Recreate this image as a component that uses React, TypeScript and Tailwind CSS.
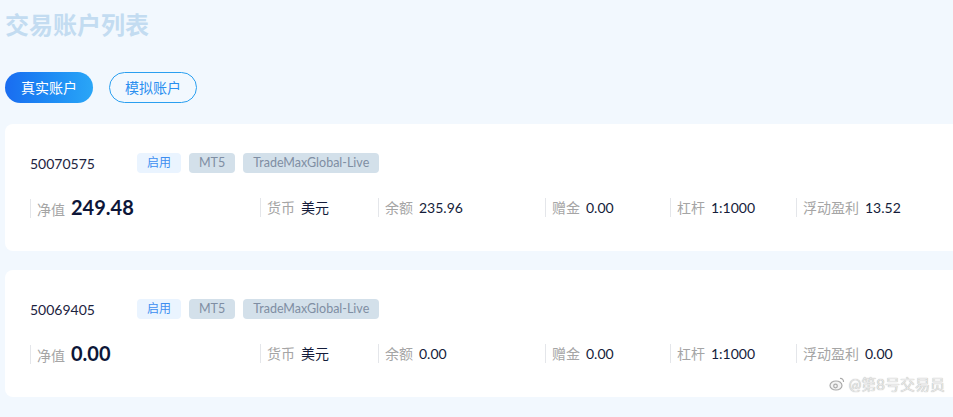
import React from 'react';

type Account = {
    id: string;
    equity: string;
    balance: string;
    bonus: string;
    leverage: string;
    floating: string;
};

const accounts: Account[] = [
    { id: '50070575', equity: '249.48', balance: '235.96', bonus: '0.00', leverage: '1:1000', floating: '13.52' },
    { id: '50069405', equity: '0.00', balance: '0.00', bonus: '0.00', leverage: '1:1000', floating: '0.00' },
];

const font = { fontFamily: 'Lato, "Noto Sans CJK SC", sans-serif' };

function Field({ label, value, width }: { label: string; value: string; width: string }) {
    return (
        <div className={`flex items-center ${width}`}>
            <div className="h-[19px] w-px bg-[#e4e6ea]" />
            <span className="ml-[6px] text-[14px] text-[#a5a5a5]">{label}</span>
            <span className="ml-[6px] text-[14px] text-[#141c3a]">{value}</span>
        </div>
    );
}

function AccountCard({ a }: { a: Account }) {
    return (
        <div className="ml-[5px] w-[960px] h-[127px] rounded-[8px] bg-white pl-[25px] pt-[29px]">
            <div className="flex items-center h-[20px]">
                <span className="w-[107px] text-[14px] text-[#1c2340]">{a.id}</span>
                <span className="h-[20px] px-[10px] rounded-[4px] bg-[#eaf4ff] text-[12px] leading-[20px] text-[#3d8ef0]">启用</span>
                <span className="ml-[8px] h-[20px] px-[10px] rounded-[4px] bg-[#d3e0ea] text-[12.5px] leading-[20px] text-[#7f8ea3]">MT5</span>
                <span className="ml-[8px] h-[20px] px-[10px] rounded-[4px] bg-[#d3e0ea] text-[12.5px] leading-[20px] text-[#7f8ea3]">TradeMaxGlobal-Live</span>
            </div>
            <div className="mt-[19px] flex items-center">
                <div className="flex items-center w-[230px]">
                    <div className="h-[19px] w-px bg-[#e4e6ea] mt-[3px]" />
                    <span className="ml-[6px] mt-[4px] text-[14px] text-[#a5a5a5]">净值</span>
                    <span className="ml-[6px] text-[20px] font-bold text-[#0d1638]">{a.equity}</span>
                </div>
                <Field label="货币" value="美元" width="w-[118px]" />
                <Field label="余额" value={a.balance} width="w-[167px]" />
                <Field label="赠金" value={a.bonus} width="w-[125px]" />
                <Field label="杠杆" value={a.leverage} width="w-[126px]" />
                <Field label="浮动盈利" value={a.floating} width="w-[140px]" />
            </div>
        </div>
    );
}

export default function App() {
    return (
        <div className="relative w-[953px] h-[417px] overflow-hidden bg-[#f2f8fe]" style={font}>
            <h1 className="pl-[5px] pt-[9px] text-[24px] leading-[32px] font-bold text-[#c3dcf1]">交易账户列表</h1>
            <div className="mt-[31px] ml-[5px] flex gap-[16px]">
                <button className="w-[88px] h-[31px] rounded-full bg-gradient-to-r from-[#1a6cf0] to-[#2aa6f7] text-[14px] text-white">
                    真实账户
                </button>
                <button className="w-[88px] h-[31px] rounded-full border border-[#2a9ff0] text-[14px] text-[#2a8ff0]">
                    模拟账户
                </button>
            </div>
            <div className="mt-[21px] flex flex-col gap-[19px]">
                {accounts.map((a) => (
                    <AccountCard key={a.id} a={a} />
                ))}
            </div>
            <div className="absolute right-[8px] bottom-[22px] flex items-center gap-[4px] text-[15px] text-[#e8e8e8] [text-shadow:0_0_1px_#999]">
                <svg width="16" height="14" viewBox="0 0 16 14" fill="none" stroke="#aaa" strokeWidth="1.2">
                    <ellipse cx="7" cy="8.5" rx="6" ry="4.5" fill="#f4f4f4" />
                    <circle cx="6.5" cy="9" r="1.8" />
                    <path d="M11 1.5a3 3 0 0 1 3.5 3.5" />
                </svg>
                <span>@第8号交易员</span>
            </div>
        </div>
    );
}
